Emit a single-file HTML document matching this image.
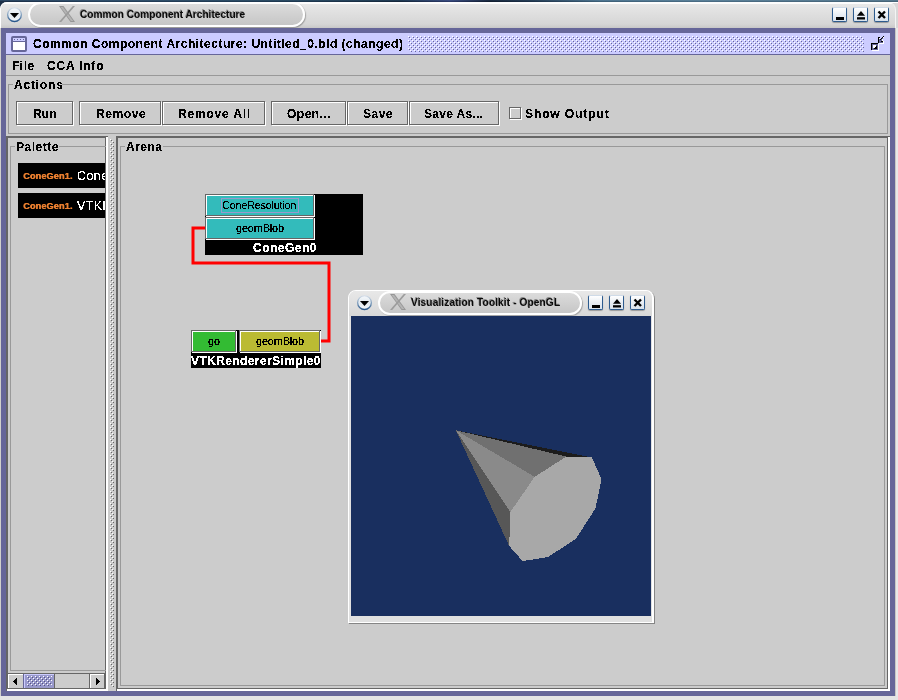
<!DOCTYPE html>
<html><head><meta charset="utf-8">
<style>
*{margin:0;padding:0;box-sizing:border-box}
html,body{width:898px;height:700px;overflow:hidden;background:#e4e4e4;position:relative}
body{font-family:"Liberation Sans",sans-serif}
.a{position:absolute}
.t{position:absolute;white-space:pre;font-family:"Liberation Sans",sans-serif;font-weight:bold;font-size:12px;letter-spacing:0.5px;color:#000;line-height:14px;filter:url(#crisp)}
.n{font-weight:normal;filter:url(#crisp)}
.nf{filter:none;will-change:transform}
.btn{position:absolute;background:#ccc;border-top:1px solid #666;border-left:1px solid #666;border-right:1px solid #666;border-bottom:1px solid #666;box-shadow:inset 1px 1px 0 #fff, 1px 1px 0 #fff}
svg{position:absolute;overflow:visible}
.wb{position:absolute;width:15px;height:15px;border:1px solid #2d5b8e;border-top-color:#cfdbe8;border-radius:2px;background:linear-gradient(#ffffff,#e9eef4 50%,#d9e2ec);box-shadow:0 1px 1px rgba(0,0,0,0.3)}
</style></head><body>
<svg width="0" height="0" style="position:absolute">
 <defs>
  <pattern id="bumpP" width="4" height="4" patternUnits="userSpaceOnUse">
   <rect x="0" y="0" width="1" height="1" fill="#fff"/><rect x="2" y="2" width="1" height="1" fill="#fff"/>
   <rect x="1" y="1" width="1" height="1" fill="#666699"/><rect x="3" y="3" width="1" height="1" fill="#666699"/>
  </pattern>
  <pattern id="bumpG" width="4" height="4" patternUnits="userSpaceOnUse">
   <rect x="0" y="0" width="1" height="1" fill="#fff"/><rect x="2" y="2" width="1" height="1" fill="#fff"/>
   <rect x="1" y="1" width="1" height="1" fill="#666"/><rect x="3" y="3" width="1" height="1" fill="#666"/>
  </pattern>
  <pattern id="bumpS" width="4" height="4" patternUnits="userSpaceOnUse">
   <rect x="0" y="0" width="1" height="1" fill="#fff"/><rect x="2" y="2" width="1" height="1" fill="#fff"/>
   <rect x="1" y="1" width="1" height="1" fill="#555580"/><rect x="3" y="3" width="1" height="1" fill="#555580"/>
  </pattern>
  <pattern id="bumpT" width="4" height="4" patternUnits="userSpaceOnUse">
   <rect x="0" y="0" width="1" height="1" fill="#ccccff"/><rect x="2" y="2" width="1" height="1" fill="#ccccff"/>
   <rect x="1" y="1" width="1" height="1" fill="#666699"/><rect x="3" y="3" width="1" height="1" fill="#666699"/>
  </pattern>
  <filter id="crisp" x="-5%" y="-20%" width="110%" height="140%" color-interpolation-filters="sRGB"><feComponentTransfer><feFuncA type="discrete" tableValues="0 0 1 1 1"/></feComponentTransfer></filter>
  <filter id="crispM" x="-5%" y="-20%" width="110%" height="140%" color-interpolation-filters="sRGB"><feComponentTransfer><feFuncA type="discrete" tableValues="0 0 1 1 1 1 1 1"/></feComponentTransfer></filter>
  <filter id="crispN" x="-5%" y="-20%" width="110%" height="140%" color-interpolation-filters="sRGB"><feComponentTransfer><feFuncA type="discrete" tableValues="0 1 1 1 1 1"/></feComponentTransfer></filter>
 </defs>
</svg>

<!-- desktop strip -->
<div class="a" style="left:0;top:0;width:898px;height:10px;background:linear-gradient(90deg,#2b4662 0,#31506c 100px,#2a4a62 300px,#1f3a52 400px,#3a4c80 450px,#1a2a40 490px,#253d55 530px,#4e7590 600px,#5a8098 700px,#56788e 898px)"></div>
<div class="a" style="left:0;top:1px;width:898px;height:9px;background:linear-gradient(90deg,#1d3048 0,#243e58 100px,#1e3850 300px,#16283c 400px,#2c3a6a 450px,#121e30 490px,#1c3048 530px,#3d6078 600px,#4a6c84 700px,#466478 898px)"></div>
<!-- WM frame -->
<div class="a" style="left:0;top:2px;width:898px;height:698px;background:#e2e2e2;border-top-left-radius:7px"></div>
<div class="a" style="left:870px;top:2px;width:28px;height:1px;background:#fff"></div>
<div class="a" style="left:870px;top:3px;width:28px;height:25px;background:#d8d8d8"></div>
<div class="a" style="left:0;top:2px;width:896px;height:698px;border-radius:7px 8px 0 0;background:linear-gradient(#fdfdfd 0,#fdfdfd 2px,#e8e8e8 2px,#e2e2e2 8px,#d6d6d6 22px,#cccccc 25px,#c6c6c6 26px);border-left:1px solid #fff;border-right:1px solid #f4f4f4"></div>
<div class="a" style="left:0;top:28px;width:1px;height:668px;background:#d0d0cc"></div>
<div class="a" style="left:895px;top:28px;width:1px;height:668px;background:#c8c8c4"></div>
<div class="a" style="left:896px;top:28px;width:2px;height:672px;background:#e8e8e8"></div>
<div class="a" style="left:0;top:696px;width:898px;height:4px;background:#e4e4e4"></div>

<!-- menu circle -->
<svg style="left:7px;top:7px" width="16" height="16" viewBox="0 0 16 16">
 <defs><linearGradient id="cg" x1="0" y1="0" x2="0" y2="1"><stop offset="0" stop-color="#f4f7fa"/><stop offset="0.5" stop-color="#e2e9f0"/><stop offset="1" stop-color="#f2f5f8"/></linearGradient>
 <linearGradient id="cr" x1="0" y1="0" x2="0" y2="1"><stop offset="0" stop-color="#d8e0ea"/><stop offset="0.55" stop-color="#7898b8"/><stop offset="1" stop-color="#1f4f86"/></linearGradient></defs>
 <circle cx="7.5" cy="7.8" r="7.5" fill="url(#cr)"/>
 <circle cx="7.5" cy="7.5" r="6.2" fill="url(#cg)"/>
 <path d="M3 6.1 L12 6.1 L7.5 11.1 Z" fill="#000"/>
</svg>
<!-- pill -->
<div class="a" style="left:28px;top:2px;width:277px;height:25px;border-radius:12.5px;border:2px solid #fff;background:linear-gradient(#dcdcdc,#c6c6c6);box-shadow:1px 1px 1px rgba(0,0,0,0.25)"></div>
<svg style="left:59px;top:6px" width="16" height="16" viewBox="0 0 16 16">
 <path d="M0 0 L4.5 0 L16 16 L11.5 16 Z" fill="#969696"/><path d="M1.6 0.9 L4 0.9 L14.3 15.1 L11.9 15.1 Z" fill="#b4b4b4"/><path d="M13.8 0 L16 0 L2.2 16 L0 16 Z" fill="#9c9c9c"/>
</svg>
<div class="t nf" style="left:80px;top:8px;font-size:10.2px;letter-spacing:-0.03px;color:#0a0a0a;text-shadow:-0.8px -0.8px 0.6px #8a8a8a">Common Component Architecture</div>

<!-- WM buttons -->
<div class="wb" style="left:832px;top:7px"></div>
<div class="a" style="left:836px;top:17px;width:8px;height:2.5px;background:#000"></div>
<div class="wb" style="left:853px;top:7px"></div>
<svg style="left:853px;top:7px" width="15" height="15" viewBox="0 0 15 15"><path d="M4 8.8 L8 4 L12 8.8 Z" fill="#000"/><rect x="4" y="10.2" width="8" height="2.3" fill="#000"/></svg>
<div class="wb" style="left:874px;top:7px"></div>
<svg style="left:874px;top:7px" width="15" height="15" viewBox="0 0 15 15"><path d="M4.5 4.5 L11 11 M11 4.5 L4.5 11" stroke="#000" stroke-width="2.4"/></svg>
<!-- Internal frame -->
<div class="a" style="left:1px;top:28px;width:894px;height:668px;background:#666699"></div>
<div class="a" style="left:6px;top:33px;width:884px;height:21px;background:#ccccff"></div>
<div class="a" style="left:6px;top:54px;width:884px;height:1px;background:#666699"></div>
<!-- title icon -->
<div class="a" style="left:11px;top:36px;width:16px;height:16px;border:2px solid #666699;border-radius:2px;background:#fff"></div>
<div class="a" style="left:13px;top:38px;width:12px;height:3px;background:#ccccff"></div>
<svg style="left:13px;top:38px" width="12" height="3" shape-rendering="crispEdges"><rect x="1" y="1" width="1" height="1" fill="#666699"/><rect x="4" y="1" width="1" height="1" fill="#666699"/><rect x="7" y="1" width="1" height="1" fill="#666699"/><rect x="10" y="1" width="1" height="1" fill="#666699"/></svg>
<div class="a" style="left:13px;top:41px;width:12px;height:1px;background:#666699"></div>
<div class="t" style="left:33px;top:37px">Common Component Architecture: Untitled_0.bld (changed)</div>
<svg style="left:408px;top:36px" width="456" height="16"><rect width="456" height="16" fill="url(#bumpP)"/></svg>
<!-- iconify icon -->
<svg style="left:870px;top:35px" width="16" height="16" shape-rendering="crispEdges"><rect x="13" y="1" width="1" height="1" fill="#000"/><rect x="8" y="2" width="1" height="1" fill="#000"/><rect x="9" y="2" width="1" height="1" fill="#000"/><rect x="12" y="2" width="1" height="1" fill="#000"/><rect x="13" y="2" width="1" height="1" fill="#fff"/><rect x="8" y="3" width="1" height="1" fill="#000"/><rect x="9" y="3" width="1" height="1" fill="#fff"/><rect x="11" y="3" width="1" height="1" fill="#000"/><rect x="12" y="3" width="1" height="1" fill="#666699"/><rect x="8" y="4" width="1" height="1" fill="#000"/><rect x="9" y="4" width="1" height="1" fill="#666699"/><rect x="10" y="4" width="1" height="1" fill="#000"/><rect x="11" y="4" width="1" height="1" fill="#666699"/><rect x="12" y="4" width="1" height="1" fill="#fff"/><rect x="8" y="5" width="1" height="1" fill="#000"/><rect x="9" y="5" width="1" height="1" fill="#666699"/><rect x="10" y="5" width="1" height="1" fill="#666699"/><rect x="11" y="5" width="1" height="1" fill="#666699"/><rect x="12" y="5" width="1" height="1" fill="#fff"/><rect x="8" y="6" width="1" height="1" fill="#000"/><rect x="9" y="6" width="1" height="1" fill="#666699"/><rect x="10" y="6" width="1" height="1" fill="#666699"/><rect x="11" y="6" width="1" height="1" fill="#000"/><rect x="12" y="6" width="1" height="1" fill="#000"/><rect x="13" y="6" width="1" height="1" fill="#fff"/><rect x="8" y="7" width="1" height="1" fill="#000"/><rect x="9" y="7" width="1" height="1" fill="#666699"/><rect x="10" y="7" width="1" height="1" fill="#666699"/><rect x="11" y="7" width="1" height="1" fill="#666699"/><rect x="12" y="7" width="1" height="1" fill="#666699"/><rect x="13" y="7" width="1" height="1" fill="#fff"/><rect x="1" y="8" width="1" height="1" fill="#000"/><rect x="2" y="8" width="1" height="1" fill="#000"/><rect x="3" y="8" width="1" height="1" fill="#000"/><rect x="4" y="8" width="1" height="1" fill="#000"/><rect x="5" y="8" width="1" height="1" fill="#000"/><rect x="6" y="8" width="1" height="1" fill="#000"/><rect x="7" y="8" width="1" height="1" fill="#000"/><rect x="9" y="8" width="1" height="1" fill="#fff"/><rect x="10" y="8" width="1" height="1" fill="#fff"/><rect x="11" y="8" width="1" height="1" fill="#fff"/><rect x="12" y="8" width="1" height="1" fill="#fff"/><rect x="13" y="8" width="1" height="1" fill="#fff"/><rect x="1" y="9" width="1" height="1" fill="#000"/><rect x="2" y="9" width="1" height="1" fill="#666699"/><rect x="3" y="9" width="1" height="1" fill="#666699"/><rect x="4" y="9" width="1" height="1" fill="#666699"/><rect x="5" y="9" width="1" height="1" fill="#666699"/><rect x="6" y="9" width="1" height="1" fill="#666699"/><rect x="7" y="9" width="1" height="1" fill="#666699"/><rect x="8" y="9" width="1" height="1" fill="#fff"/><rect x="1" y="10" width="1" height="1" fill="#000"/><rect x="2" y="10" width="1" height="1" fill="#666699"/><rect x="3" y="10" width="1" height="1" fill="#fff"/><rect x="4" y="10" width="1" height="1" fill="#fff"/><rect x="5" y="10" width="1" height="1" fill="#fff"/><rect x="6" y="10" width="1" height="1" fill="#666699"/><rect x="7" y="10" width="1" height="1" fill="#666699"/><rect x="8" y="10" width="1" height="1" fill="#fff"/><rect x="1" y="11" width="1" height="1" fill="#000"/><rect x="2" y="11" width="1" height="1" fill="#666699"/><rect x="3" y="11" width="1" height="1" fill="#fff"/><rect x="4" y="11" width="1" height="1" fill="#fff"/><rect x="5" y="11" width="1" height="1" fill="#fff"/><rect x="6" y="11" width="1" height="1" fill="#000"/><rect x="7" y="11" width="1" height="1" fill="#666699"/><rect x="8" y="11" width="1" height="1" fill="#fff"/><rect x="1" y="12" width="1" height="1" fill="#000"/><rect x="2" y="12" width="1" height="1" fill="#666699"/><rect x="3" y="12" width="1" height="1" fill="#fff"/><rect x="4" y="12" width="1" height="1" fill="#fff"/><rect x="5" y="12" width="1" height="1" fill="#000"/><rect x="6" y="12" width="1" height="1" fill="#000"/><rect x="7" y="12" width="1" height="1" fill="#666699"/><rect x="8" y="12" width="1" height="1" fill="#fff"/><rect x="1" y="13" width="1" height="1" fill="#000"/><rect x="2" y="13" width="1" height="1" fill="#666699"/><rect x="3" y="13" width="1" height="1" fill="#666699"/><rect x="4" y="13" width="1" height="1" fill="#000"/><rect x="5" y="13" width="1" height="1" fill="#000"/><rect x="6" y="13" width="1" height="1" fill="#000"/><rect x="7" y="13" width="1" height="1" fill="#666699"/><rect x="8" y="13" width="1" height="1" fill="#fff"/><rect x="1" y="14" width="1" height="1" fill="#000"/><rect x="2" y="14" width="1" height="1" fill="#666699"/><rect x="3" y="14" width="1" height="1" fill="#666699"/><rect x="4" y="14" width="1" height="1" fill="#666699"/><rect x="5" y="14" width="1" height="1" fill="#666699"/><rect x="6" y="14" width="1" height="1" fill="#666699"/><rect x="7" y="14" width="1" height="1" fill="#666699"/><rect x="8" y="14" width="1" height="1" fill="#fff"/><rect x="2" y="15" width="1" height="1" fill="#fff"/><rect x="3" y="15" width="1" height="1" fill="#fff"/><rect x="4" y="15" width="1" height="1" fill="#fff"/><rect x="5" y="15" width="1" height="1" fill="#fff"/><rect x="6" y="15" width="1" height="1" fill="#fff"/><rect x="7" y="15" width="1" height="1" fill="#fff"/><rect x="8" y="15" width="1" height="1" fill="#fff"/></svg>

<!-- content pane -->
<div class="a" style="left:6px;top:55px;width:884px;height:636px;background:#ccc"></div>
<!-- menubar -->
<div class="t" style="left:12px;top:59px">File</div>
<div class="t" style="left:47px;top:59px;letter-spacing:0.8px">CCA Info</div>
<div class="a" style="left:6px;top:75px;width:884px;height:1px;background:#999"></div>

<!-- Actions group -->
<div class="a" style="left:8px;top:84px;width:880px;height:50px;border:1px solid #999"></div>
<div class="a" style="left:13px;top:78px;width:49px;height:12px;background:#ccc"></div>
<div class="t" style="left:14px;top:78px;letter-spacing:0.8px">Actions</div>

<div class="btn" style="left:16px;top:101px;width:57px;height:24px"></div>
<div class="t" style="left:33px;top:107px;letter-spacing:0.2px">Run</div>
<div class="btn" style="left:79px;top:101px;width:82px;height:24px"></div>
<div class="t" style="left:96px;top:107px;letter-spacing:0.6px">Remove</div>
<div class="btn" style="left:162px;top:101px;width:103px;height:24px"></div>
<div class="t" style="left:178px;top:107px;letter-spacing:0.8px">Remove All</div>
<div class="btn" style="left:271px;top:101px;width:75px;height:24px"></div>
<div class="t" style="left:287px;top:107px">Open...</div>
<div class="btn" style="left:347px;top:101px;width:61px;height:24px"></div>
<div class="t" style="left:363px;top:107px">Save</div>
<div class="btn" style="left:409px;top:101px;width:90px;height:24px"></div>
<div class="t" style="left:424px;top:107px;letter-spacing:0.3px">Save As...</div>
<div class="btn" style="left:509px;top:107px;width:12px;height:12px"></div>
<div class="t" style="left:525px;top:107px;letter-spacing:0.9px">Show Output</div>

<!-- split pane: left -->
<div class="a" style="left:6px;top:136px;width:102px;height:555px;border-top:2px solid #666;border-left:2px solid #666"></div>
<div class="a" style="left:105px;top:137px;width:1px;height:552px;background:#666"></div>
<div class="a" style="left:106px;top:137px;width:2px;height:554px;background:#fff"></div>
<div class="a" style="left:7px;top:688px;width:99px;height:1px;background:#666"></div>
<div class="a" style="left:7px;top:689px;width:101px;height:2px;background:#fff"></div>

<!-- palette titled border -->
<div class="a" style="left:10px;top:146px;width:96px;height:525px;border:1px solid #999;border-right:none"></div>
<div class="a" style="left:15px;top:140px;width:44px;height:12px;background:#ccc"></div>
<div class="t" style="left:16px;top:140px">Palette</div>

<!-- palette items -->
<div class="a" style="left:18px;top:163px;width:87px;height:25px;background:#000;overflow:hidden">
 <span class="t" style="left:5px;top:6px;font-size:9.2px;letter-spacing:0.1px;color:#ec8030;filter:none;will-change:transform;text-shadow:0.4px 0 0 #ec8030">ConeGen1.</span>
 <span class="t n" style="left:59px;top:6px;font-size:12.5px;letter-spacing:0.4px;color:#fff;filter:url(#crisp)">ConeResolution</span>
</div>
<div class="a" style="left:18px;top:193px;width:87px;height:25px;background:#000;overflow:hidden">
 <span class="t" style="left:5px;top:6px;font-size:9.2px;letter-spacing:0.1px;color:#ec8030;filter:none;will-change:transform;text-shadow:0.4px 0 0 #ec8030">ConeGen1.</span>
 <span class="t n" style="left:59px;top:6px;font-size:12.5px;letter-spacing:0.4px;color:#fff;filter:url(#crisp)">VTKRendererSimple</span>
</div>

<!-- scrollbar -->
<div class="a" style="left:8px;top:673px;width:97px;height:16px;background:#ccc;border-top:1px solid #666;border-bottom:1px solid #666"></div>
<div class="a" style="left:8px;top:674px;width:15px;height:14px;background:#ccc;box-shadow:inset 1px 1px 0 #fff"></div>
<svg style="left:13px;top:677px" width="4" height="9" viewBox="0 0 4 9" shape-rendering="crispEdges"><path d="M0 4.5 L4 0.5 L4 8.5 Z" fill="#000"/></svg>
<div class="a" style="left:23px;top:674px;width:31px;height:14px;background:#9999cc;border-left:1px solid #666699;box-shadow:inset 1px 1px 0 #ccccff"></div>
<svg style="left:27px;top:676px" width="25" height="10"><rect width="25" height="10" fill="url(#bumpS)"/></svg>
<div class="a" style="left:54px;top:674px;width:35px;height:14px;background:#ccc;border-left:1px solid #666"></div>
<div class="a" style="left:89px;top:674px;width:16px;height:14px;background:#ccc;border-left:1px solid #666;box-shadow:inset 1px 1px 0 #fff"></div>
<svg style="left:96px;top:677px" width="4" height="9" viewBox="0 0 4 9" shape-rendering="crispEdges"><path d="M4 4.5 L0 0.5 L0 8.5 Z" fill="#000"/></svg>
<div class="a" style="left:104px;top:673px;width:1px;height:16px;background:#666"></div>

<!-- divider bumps -->
<svg style="left:110px;top:139px" width="4" height="548"><rect width="4" height="548" fill="url(#bumpG)"/></svg>

<!-- split pane: right -->
<div class="a" style="left:116px;top:136px;width:774px;height:555px;border-top:2px solid #666;border-left:2px solid #666"></div>
<div class="a" style="left:887px;top:137px;width:1px;height:552px;background:#666"></div>
<div class="a" style="left:888px;top:137px;width:2px;height:554px;background:#fff"></div>
<div class="a" style="left:117px;top:688px;width:771px;height:1px;background:#666"></div>
<div class="a" style="left:117px;top:689px;width:773px;height:2px;background:#fff"></div>

<!-- arena titled border -->
<div class="a" style="left:120px;top:146px;width:765px;height:540px;border:1px solid #999"></div>
<div class="a" style="left:125px;top:140px;width:38px;height:12px;background:#ccc"></div>
<div class="t" style="left:126px;top:140px">Arena</div>

<!-- red connection -->
<svg style="left:0;top:0" width="898" height="700"><path d="M205 228 L193 228 L193 263 L329 263 L329 341 L321 341" fill="none" stroke="#ff0000" stroke-width="3"/></svg>

<!-- ConeGen0 -->
<div class="a" style="left:205px;top:194px;width:158px;height:61px;background:#000"></div>
<div class="btn" style="left:205px;top:194px;width:109px;height:22px;background:#33bbbb"></div>
<div class="a" style="left:221px;top:198px;width:78px;height:15px;border:1px solid #9999cc"></div>
<div class="t n" style="left:222px;top:198px;font-size:11px;letter-spacing:-0.3px">ConeResolution</div>
<div class="btn" style="left:205px;top:217px;width:109px;height:22px;background:#33bbbb"></div>
<div class="t n" style="left:236px;top:221px;font-size:11px;letter-spacing:-0.2px">geomBlob</div>
<div class="t" style="left:253px;top:241px;color:#fff">ConeGen0</div>

<!-- VTKRendererSimple0 -->
<div class="a" style="left:191px;top:330px;width:130px;height:38px;background:#000"></div>
<div class="btn" style="left:191px;top:330px;width:45px;height:22px;background:#33bb33"></div>
<div class="t n" style="left:208px;top:334px;font-size:11px;letter-spacing:-0.2px">go</div>
<div class="btn" style="left:239px;top:330px;width:81px;height:22px;background:#bbbb33"></div>
<div class="t n" style="left:256px;top:334px;font-size:11px;letter-spacing:-0.2px">geomBlob</div>
<div class="t" style="left:191px;top:354px;color:#fff;letter-spacing:0.4px">VTKRendererSimple0</div>

<!-- VTK window -->
<div class="a" style="left:348px;top:290px;width:306px;height:333px;border-radius:8px 8px 0 0;background:#e0e0e0;border:1px solid #fff;border-right-width:2px;box-shadow:1px 1px 0 rgba(0,0,0,0.35)"></div>
<div class="a" style="left:349px;top:291px;width:303px;height:25px;border-radius:7px 7px 0 0;background:linear-gradient(#e8e8e8,#d8d8d8)"></div>
<svg style="left:357px;top:295px" width="16" height="16" viewBox="0 0 16 16">
 <circle cx="7.5" cy="7.8" r="7.5" fill="url(#cr)"/>
 <circle cx="7.5" cy="7.5" r="6.2" fill="url(#cg)"/>
 <path d="M3 6.1 L12 6.1 L7.5 11.1 Z" fill="#000"/>
</svg>
<div class="a" style="left:378px;top:291px;width:204px;height:24px;border-radius:12px;border:2px solid #fff;background:linear-gradient(#dcdcdc,#c6c6c6);box-shadow:1px 1px 1px rgba(0,0,0,0.25)"></div>
<svg style="left:390px;top:294px" width="16" height="16" viewBox="0 0 16 16">
 <path d="M0 0 L4.5 0 L16 16 L11.5 16 Z" fill="#969696"/><path d="M1.6 0.9 L4 0.9 L14.3 15.1 L11.9 15.1 Z" fill="#b4b4b4"/><path d="M13.8 0 L16 0 L2.2 16 L0 16 Z" fill="#9c9c9c"/>
</svg>
<div class="t nf" style="left:411px;top:296px;font-size:10.2px;letter-spacing:0.08px;color:#0a0a0a;text-shadow:-0.8px -0.8px 0.6px #8a8a8a">Visualization Toolkit - OpenGL</div>
<div class="wb" style="left:588px;top:295px"></div>
<div class="a" style="left:592px;top:305px;width:8px;height:2.5px;background:#000"></div>
<div class="wb" style="left:609px;top:295px"></div>
<svg style="left:609px;top:295px" width="15" height="15" viewBox="0 0 15 15"><path d="M4 8.8 L8 4 L12 8.8 Z" fill="#000"/><rect x="4" y="10.2" width="8" height="2.3" fill="#000"/></svg>
<div class="wb" style="left:630px;top:295px"></div>
<svg style="left:630px;top:295px" width="15" height="15" viewBox="0 0 15 15"><path d="M4.5 4.5 L11 11 M11 4.5 L4.5 11" stroke="#000" stroke-width="2.4"/></svg>
<div class="a" style="left:351px;top:316px;width:300px;height:300px;background:#192f5f"></div>
<svg style="left:0;top:0" width="898" height="700" shape-rendering="crispEdges">
 <polygon points="455.8,430.2 591.8,457.4 566.3,456.6" fill="#1c1c1c"/>
 <polygon points="455.8,430.2 566.3,456.6 534.7,476.8" fill="#707070"/>
 <polygon points="455.8,430.2 534.7,476.8 510.4,512" fill="#8a8a8a"/>
 <polygon points="455.8,430.2 510.4,512 509.2,546" fill="#575757"/>
 <polygon points="566.3,456.6 591.8,457.4 601.5,479.2 595.5,508.4 576,538.7 548.1,557 522.6,561.1 509.2,546 510.4,512 534.7,476.8" fill="#a8a8a8"/>
</svg>

</body></html>
